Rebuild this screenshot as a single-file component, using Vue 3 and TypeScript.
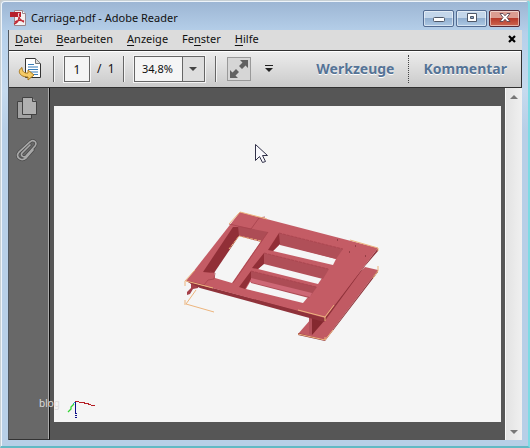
<script setup lang="ts">
import { ref } from 'vue'

interface MenuEntry {
  before: string
  key: string
  after: string
}

const menu: MenuEntry[] = [
  { before: '', key: 'D', after: 'atei' },
  { before: '', key: 'B', after: 'earbeiten' },
  { before: '', key: 'A', after: 'nzeige' },
  { before: 'Fe', key: 'n', after: 'ster' },
  { before: '', key: 'H', after: 'ilfe' },
]
const page = ref('1')
const zoomLevel = ref('34,8%')
</script>

<template>
  <div class="window">
    <header class="titlebar">
      <svg class="app-icon" width="17" height="17" viewBox="0 0 17 17">
        <path d="M4.500.500h8l3 3v12h-11z" fill="#f3f0f0" stroke="#99868c" />
        <path d="M12.500.500v3h3" fill="#fff" stroke="#99868c" />
        <path d="M0 2h11v5H0z" fill="#b71f2b" />
        <path d="M9 3c-1 5 1 7 5 9M9 7c0 3-2 6-5 7M5 12c2-2 5-2 9-1" fill="none" stroke="#c12935" stroke-width="1.400" />
        <path d="M9 3c-1 2-.500 3 0 4" fill="none" stroke="#fff" />
      </svg>
      <h1>Carriage.pdf - Adobe Reader</h1>
      <div class="caption-buttons">
        <button type="button" aria-label="Minimieren">
          <svg width="12" height="10" viewBox="0 0 12 10"><rect x=".5" y="4.500" width="11" height="4" rx="1" fill="#fff" stroke="#4f5868" /></svg>
        </button>
        <button type="button" aria-label="Maximieren">
          <svg width="12" height="10" viewBox="0 0 12 10"><path d="M1.500.500h9v8h-9z" fill="#fff" stroke="#4f5868" /><path d="M4.500 3.500h3v2h-3z" fill="#86a4c8" stroke="#4f5868" /></svg>
        </button>
        <button type="button" class="close" aria-label="Schließen">
          <svg width="12" height="10" viewBox="0 0 12 10"><path d="M1 .500h3l2 2.300L8 .500h3L8 4.500l3 4H8L6 6.300 4 8.500H1l3-4z" fill="#fff" stroke="#5a4450" stroke-width=".9" /></svg>
        </button>
      </div>
    </header>

    <div class="client">
      <nav class="menubar">
        <a v-for="m in menu" :key="m.key" href="#">{{ m.before }}<u>{{ m.key }}</u>{{ m.after }}</a>
        <button type="button" class="doc-close" aria-label="Dokument schließen">
          <svg width="8" height="8" viewBox="0 0 8 8"><path d="M1 1l6 6M7 1L1 7" stroke="#000" stroke-width="2.200" /></svg>
        </button>
      </nav>

      <div class="toolbar">
        <button type="button" class="plain open" aria-label="Öffnen">
          <svg width="24" height="24" viewBox="0 0 24 24">
            <path d="M7.500 1.500h10l5 5v14h-15z" fill="#fff" stroke="#333" />
            <path d="M17.500 1.500v5h5" fill="#ddd" stroke="#777" />
            <path d="M10 7.500h6M10 10h10M10 12.500h10M12 15h8M15 17.500h5" stroke="#397db9" />
            <path d="M4 10.500c-5 3-3 9.500 6 9.500v3l6-5-6-5v3c-3 .500-6-1-6-5.500z" fill="#f5cb66" stroke="#a9781c" />
          </svg>
        </button>
        <span class="rule"></span>
        <input v-model="page" class="page-number" aria-label="Seite" />
        <span class="total">/&nbsp; 1</span>
        <span class="rule"></span>
        <div class="zoom">
          <select v-model="zoomLevel" aria-label="Zoom">
            <option>34,8%</option>
            <option>50%</option>
            <option>100%</option>
          </select>
          <svg width="22" height="24" viewBox="0 0 22 24"><path d="M.500 0v24" stroke="#666" /><path d="M7 10h8l-4 4z" fill="#444" /></svg>
        </div>
        <span class="rule"></span>
        <button type="button" class="fullscreen" aria-label="Vollbild">
          <svg width="22" height="22" viewBox="0 0 22 22"><path d="M12 2h8v8l-2.500-2.500-3.500 3.500-3-3 3.500-3.500zM2 12l2.500 2.500L8 11l3 3-3.500 3.500L10 20H2z" fill="#626262" /></svg>
        </button>
        <button type="button" class="plain more" aria-label="Weitere Werkzeuge">
          <svg width="8" height="8" viewBox="0 0 8 8"><path d="M0 .500h8" stroke="#222" /><path d="M0 3h8L4 7z" fill="#222" /></svg>
        </button>
        <div class="panels">
          <button type="button" class="plain">Werkzeuge</button>
          <button type="button" class="plain comment">Kommentar</button>
        </div>
      </div>

      <main class="workspace">
        <aside class="sidebar">
          <button type="button" class="plain" aria-label="Seitenminiaturen">
            <svg width="22" height="24" viewBox="0 0 22 24">
              <path d="M1.500 5.500h14v17h-14z" fill="#a2a2a2" stroke="#424242" />
              <path d="M6.500 1.500h10l4 4v13h-14z" fill="#b0b0b0" stroke="#424242" />
              <path d="M16.500 1.500v4h4" fill="#999" stroke="#424242" />
            </svg>
          </button>
          <button type="button" class="plain" aria-label="Anlagen">
            <svg width="22" height="24" viewBox="0 0 22 24">
              <g fill="none" stroke-linecap="round">
                <path d="M14 7L6 15c-2 3 2 5 4 3l9-10c3-4-2-7-5-4L3 14c-4 5 2 10 7 6l7-8" stroke="#484848" stroke-width="3" />
                <path d="M14 7L6 15c-2 3 2 5 4 3l9-10c3-4-2-7-5-4L3 14c-4 5 2 10 7 6l7-8" stroke="#a8a8a8" stroke-width="1.700" />
              </g>
            </svg>
          </button>
          <span class="watermark">blog</span>
        </aside>

        <section class="canvas">
          <div class="sheet">
            <svg class="model" viewBox="54 106 447 316" role="img" aria-label="3D-Modell Carriage">
              <!-- lower rail on the right -->
              <path d="M298 334L311 319 365 267 378 270 325 340z" fill="#c15a63" />
              <path d="M298 333l27 7L378 270v2L325 341l-27-6z" fill="#8e3036" />
              <path d="M312 314l13 3v3L312 335z" fill="#85282f" />
              <path d="M309 315l3 1v19l-3-1z" fill="#b2505a" />
              <!-- left foot -->
              <path d="M187 281l11 3v4l-5 1-3 5-3 1v-3l4-4v-4z" fill="#a54049" />
              <!-- slab edges -->
              <path d="M186 281L325 317 378 248v3l-13 15L324 322 200 288z" fill="#8f323a" />
              <!-- top face -->
              <path d="M240 212L378 248 325 318 186 281z" fill="#c45c65" />
              <!-- left opening -->
              <path d="M239 235l22 6-29 42-17-5-1-5-3-2z" fill="#f5f5f5" />
              <path d="M233 227h6v9l-25 37-11-1z" fill="#912f37" />
              <path d="M238 226l30 6-7 10-22-6z" fill="#ad4c55" />
              <!-- right opening, rear bay -->
              <path d="M280 244l56 15-3 6-60-14z" fill="#f5f5f5" />
              <path d="M279 233L343 249l-7 10-56-14z" fill="#b04f58" />
              <path d="M279 233l1 11-7 7-5-1z" fill="#912f37" />
              <!-- middle bay -->
              <path d="M264 263l58 15-4 6-60-15z" fill="#f5f5f5" />
              <path d="M264 253l65 16-6 10-59-15z" fill="#b04f58" />
              <path d="M264 253v11l-6 5-6-1z" fill="#912f37" />
              <!-- front bay -->
              <path d="M250 282l58 15-5 6-57-14z" fill="#f5f5f5" />
              <path d="M251 271l66 16-8 11-58-15z" fill="#ad4c55" />
              <path d="M251 278l61 15-2 4-60-15z" fill="#ce6876" />
              <path d="M251 271v8l-6 10-6-2z" fill="#912f37" />
              <g fill="none" stroke="#a7434c" stroke-width=".8">
                <path d="M279 233l64 16M264 253l64 16M251 271l65 16" stroke-dasharray="3 1" />
                <path d="M229 224l22 5 8-11 6-1M187 281l17 4 4-5 6-1 1-6-5-1" />
                <path d="M268 232l-35 51" />
              </g>
              <path d="M337 240h1M355 246h1M349 252h1M365 256h1" stroke="#6a2229" />
              <!-- highlighted edges -->
              <g fill="none" stroke="#edb57d" stroke-width="1">
                <path d="M229 224l11-12 27 7" />
                <path d="M229 249l10-13 22 5" stroke-dasharray="3 1" />
                <path d="M185 286v-5l10-11M186 281l27 7" />
                <path d="M196 290l-10 14 28 8M185 300v5" />
                <path d="M350 240l28 8v3M378 266v5l-5 7" />
                <path d="M298 310l27 7 9-12M325 317v4M298 334l27 6v-3M325 340l8-10" />
              </g>
              <!-- axis tripod -->
              <g fill="none">
                <path d="M75 401.500h4M79 402.500h6M84 403.500h5M88 404.500h3M91 405.500h4" stroke="#b51d24" />
                <path d="M74 404l-3 3v2l-3 3" stroke="#32d532" stroke-width="1.300" />
                <path d="M75.500 402v12" stroke="#10108a" />
                <path d="M76 413v6" stroke="#10108a" stroke-width="2" stroke-dasharray="1 1" />
                <path d="M75 402l-2 2" stroke="#25aab5" />
              </g>
              <!-- pointer -->
              <path d="M255.500 144.500v16l4-4 3 6 3-1-3-6h5z" fill="#f8f8fc" stroke="#303048" />
            </svg>
          </div>
        </section>

        <div class="scrollbar">
          <button type="button" class="plain" aria-label="Nach oben">
            <svg width="8" height="4" viewBox="0 0 8 4"><path d="M0 4l4-4 4 4z" fill="#777" /></svg>
          </button>
          <button type="button" class="plain" aria-label="Nach unten">
            <svg width="8" height="4" viewBox="0 0 8 4"><path d="M0 0h8L4 4z" fill="#777" /></svg>
          </button>
        </div>
      </main>
    </div>
  </div>
</template>

<style>
body {
  margin: 0;
  background: #c9c9c9;
}
</style>

<style scoped>
* {
  box-sizing: border-box;
}
svg {
  display: block;
}
button {
  display: flex;
  align-items: center;
  justify-content: center;
  padding: 0;
  font: inherit;
}
.plain {
  border: 0;
  background: none;
}
.window {
  display: flex;
  flex-direction: column;
  min-height: 100vh;
  padding: 0 6px 6px 7px;
  border: 1px solid #c8d0d4;
  border-right: 2px solid #7edbe4;
  border-bottom: 2px solid #62b9c4;
  border-radius: 4px 4px 0 0;
  background: linear-gradient(#9cb5d3, #b6d0ea 32px, #c5daee 90px, #b7cfe7 130px);
  box-shadow: inset 1px 1px #eef4fa;
  font-family: "Noto Sans", "Liberation Sans", sans-serif;
  font-size: 12px;
  line-height: 16px;
  color: #111;
}
.titlebar {
  display: flex;
  align-items: center;
  height: 29px;
  padding: 5px 2px 0;
}
.titlebar h1 {
  flex: 1;
  margin: 0 0 0 4px;
  font-size: 11px;
  font-weight: 400;
}
.caption-buttons {
  display: flex;
  gap: 2px;
}
.caption-buttons button {
  width: 31px;
  height: 17px;
  border: 1px solid #526b91;
  border-radius: 2px;
  box-shadow: inset 0 0 0 1px #ffffff80;
  background: linear-gradient(#c3d6ea 45%, #91afd0 50%, #adc8e3);
}
.caption-buttons .close {
  border-color: #572936;
  background: linear-gradient(#dc9c91 45%, #b83a2b 50%, #cc6650);
}
.client {
  display: flex;
  flex: 1;
  flex-direction: column;
  border: 1px solid #505860;
  border-width: 0 0 0 1px;
}
.menubar {
  display: flex;
  align-items: center;
  gap: 14px;
  height: 20px;
  padding: 0 6px 2px;
  background: #dcdcdc;
  font-size: 11px;
}
.menubar a {
  color: #111;
  text-decoration: none;
}
.menubar u {
  text-underline-offset: 2px;
}
.doc-close {
  margin-left: auto;
  border: 0;
  background: none;
}
.toolbar {
  display: flex;
  align-items: center;
  height: 38px;
  padding-left: 9px;
  border: 1px solid #303030;
  border-left: 0;
  background: linear-gradient(#ededed, #cacaca);
  box-shadow: inset 0 1px #fff;
}
.rule {
  width: 1px;
  height: 26px;
  background: #666;
  box-shadow: 1px 0 #f4f4f4;
}
.open {
  margin-right: 11px;
}
.page-number {
  width: 26px;
  height: 26px;
  margin-left: 10px;
  padding: 0;
  border: 1px solid #666;
  outline: 1px solid #f4f4f4;
  background: #f5f5f5;
  color: #111;
  font: inherit;
  text-align: center;
}
.total {
  width: 26px;
  margin: 0 0 0 7px;
}
.zoom {
  display: grid;
  grid-template-columns: 1fr 22px;
  align-items: center;
  width: 71px;
  height: 26px;
  margin: 0 10px;
  border: 1px solid #666;
  outline: 1px solid #f4f4f4;
  background: linear-gradient(90deg, #f5f5f5 47px, #dedede 47px);
}
.zoom select {
  grid-area: 1 / 1 / 2 / 3;
  height: 24px;
  padding: 0 0 0 7px;
  border: 0;
  appearance: none;
  background: none;
  color: #111;
  font: inherit;
  font-size: 11px;
}
.zoom svg {
  grid-area: 1 / 2;
  pointer-events: none;
}
.fullscreen {
  width: 24px;
  height: 24px;
  margin-left: 11px;
  border: 1px solid #999;
  background: #d6d6d6;
}
.more {
  margin-left: 14px;
}
.panels {
  display: flex;
  align-items: center;
  margin-left: auto;
  font-size: 14px;
  font-weight: 700;
}
.panels button {
  height: 28px;
  padding: 0 14px;
  color: #557396;
  text-shadow: 0 1px #fff;
}
.panels .comment {
  border-left: 1px dotted #444;
}
.workspace {
  display: flex;
  flex: 1;
}
.sidebar {
  position: relative;
  display: flex;
  flex-direction: column;
  align-items: center;
  gap: 18px;
  width: 41px;
  padding: 8px 4px 0 0;
  border-right: 1px solid #111;
  border-bottom: 1px solid #333;
  background: #686868;
  box-shadow: inset -1px 0 #aaa;
}
.watermark {
  position: absolute;
  bottom: 28px;
  left: 30px;
  color: #dcdcdc;
  font-size: 10px;
}
.canvas {
  flex: 1;
  padding: 18px 4px;
  background: #565656;
}
.sheet {
  background: #f5f5f5;
}
.model {
  width: 100%;
  height: auto;
}
.scrollbar {
  display: flex;
  flex-direction: column;
  justify-content: space-between;
  align-items: center;
  width: 17px;
  padding: 7px 0 6px;
  border-left: 1px solid #f8f8f8;
  background: linear-gradient(90deg, #e3e3e3, #f0f0f0);
}
</style>
